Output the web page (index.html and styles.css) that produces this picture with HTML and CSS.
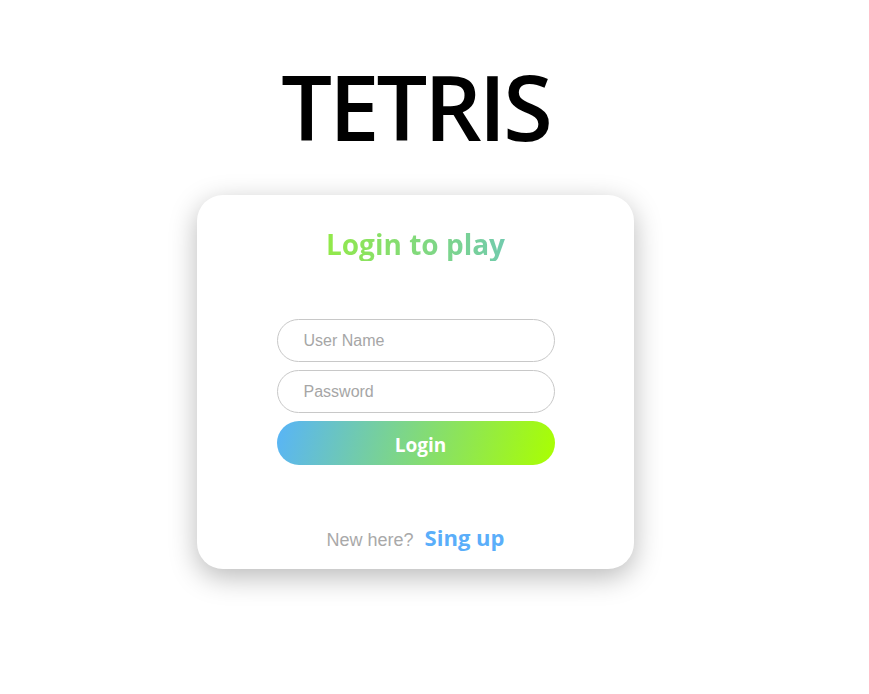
FILE: index.html
```html
<!DOCTYPE html>
<html lang="en">
<head>
<meta charset="utf-8">
<title>Tetris - Login</title>
<link rel="stylesheet" href="styles.css">
</head>
<body>
<main class="page">
  <h1 class="title">TETRIS</h1>
  <section class="card">
    <h2 class="card-title">Login to play</h2>
    <form class="form">
      <input class="field" type="text" placeholder="User Name">
      <input class="field" type="password" placeholder="Password">
      <button class="btn" type="button">Login</button>
    </form>
    <p class="footer"><span class="muted">New here?</span><a class="link" href="#">Sing up</a></p>
  </section>
</main>
</body>
</html>
```

FILE: styles.css
```css
html, body {
  margin: 0;
  padding: 0;
  background: #fff;
}
body {
  font-family: "Open Sans", "Noto Sans", sans-serif;
}
.page {
  width: 831px;
  min-height: 694px;
  display: flex;
  flex-direction: column;
  align-items: center;
}
.title {
  margin: 61px 0 0;
  font-size: 90px;
  line-height: 90px;
  font-weight: 600;
  color: #000;
  letter-spacing: -3px;
}
.card {
  margin-top: 44px;
  width: 437px;
  height: 374px;
  box-sizing: border-box;
  background: #fff;
  border-radius: 26px;
  box-shadow: 0 8px 28px rgba(0, 0, 0, 0.28);
  padding: 33px 0 0;
  display: flex;
  flex-direction: column;
  align-items: center;
}
.card-title {
  margin: 0;
  width: 100%;
  text-align: center;
  font-size: 28px;
  line-height: 33px;
  font-weight: 700;
  background: linear-gradient(to right, #aaff00, #5ab5f5);
  -webkit-background-clip: text;
  background-clip: text;
  color: transparent;
}
.form {
  margin-top: 58px;
  width: 278px;
  display: flex;
  flex-direction: column;
  gap: 8px;
}
.field {
  height: 43px;
  box-sizing: border-box;
  border: 1px solid #c8c8c8;
  border-radius: 22px;
  padding: 0 0 0 26px;
  font-family: "Liberation Sans", Arial, sans-serif;
  font-size: 16px;
  color: #333;
  outline: none;
  background: #fff;
}
.field::placeholder {
  color: #a6a6a6;
}
.btn {
  height: 44px;
  border: none;
  border-radius: 22px;
  background: linear-gradient(105deg, #58b4f8, #aaff00);
  color: #fff;
  font-family: "Open Sans", "Noto Sans", sans-serif;
  font-size: 19px;
  font-weight: 700;
  padding: 3px 0 0 10px;
  cursor: pointer;
}
.footer {
  margin: auto 0 17px;
  line-height: 24px;
  display: flex;
  align-items: baseline;
  gap: 11px;
}
.muted {
  font-family: "Liberation Sans", Arial, sans-serif;
  font-size: 18px;
  color: #a9a9a9;
}
.link {
  font-size: 22px;
  font-weight: 700;
  color: #5aaefa;
  text-decoration: none;
}
```
